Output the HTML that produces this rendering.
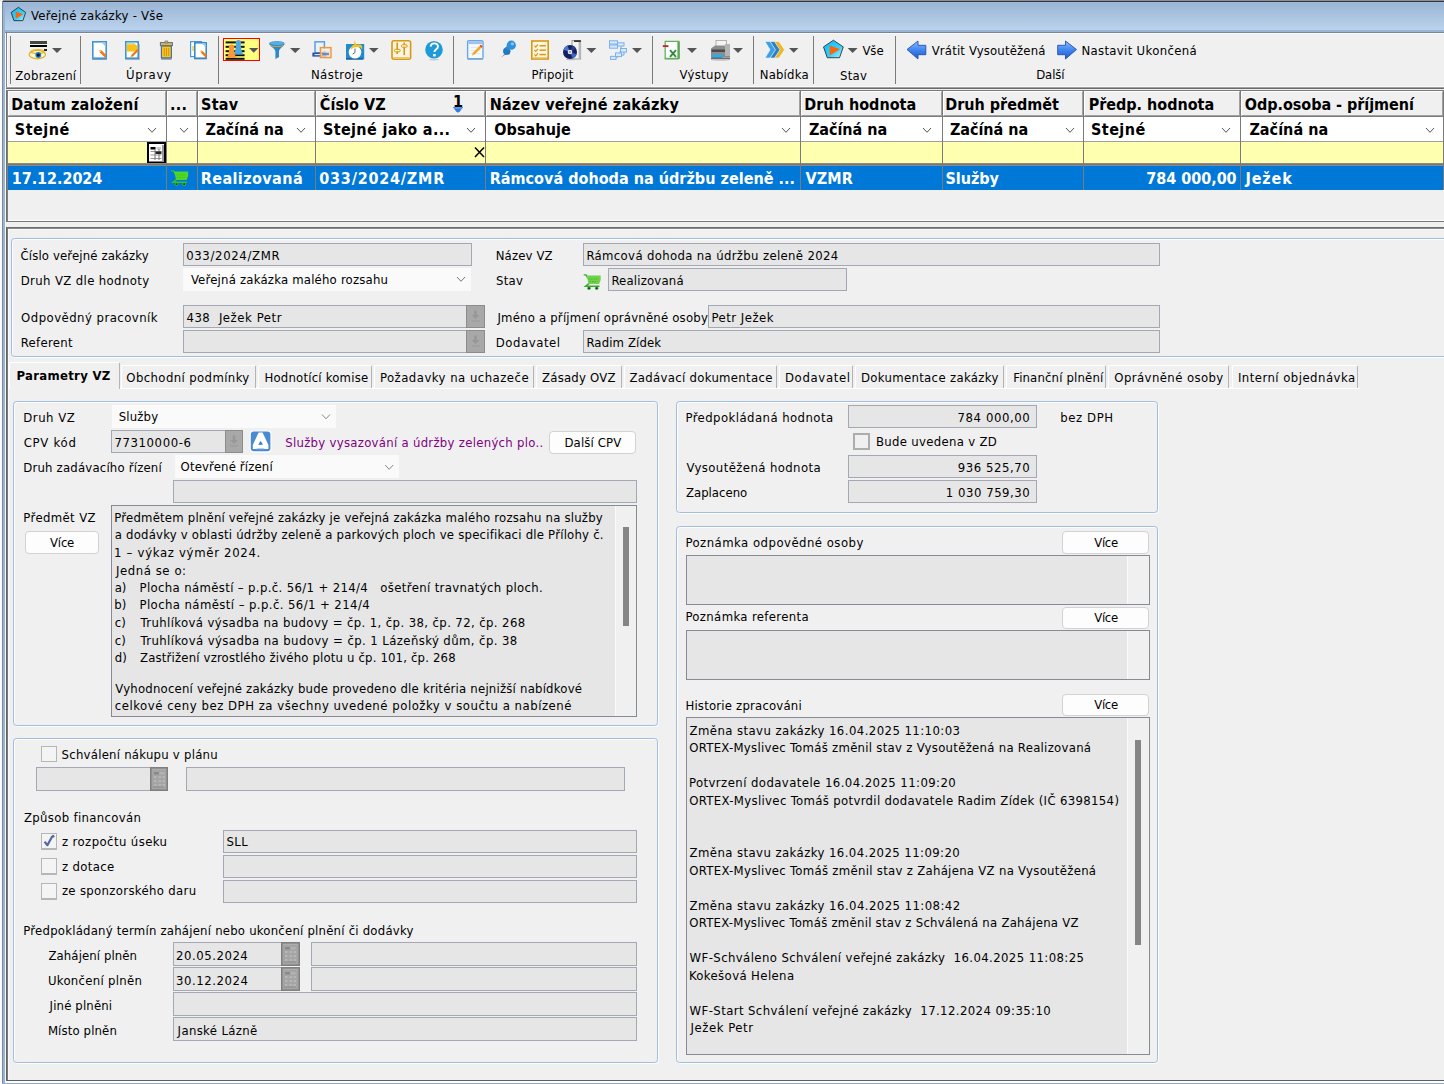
<!DOCTYPE html>
<html lang="cs"><head><meta charset="utf-8"><title>Veřejné zakázky - Vše</title>
<style>
html,body{margin:0;padding:0}
body{width:1444px;height:1084px;overflow:hidden;background:#f0f0f0;position:relative;font-family:"DejaVu Sans Condensed","Liberation Sans",sans-serif;font-size:13px;color:#000}
body div,body span,body svg{position:absolute;box-sizing:border-box}
.t{font-size:13px;line-height:16px;white-space:pre}
.tb{font-size:13px;line-height:16px;white-space:pre;font-weight:bold}
.b{font-size:16px;line-height:20px;white-space:pre;font-weight:bold}
.w{color:#fff}
.p{color:#800080}
.f{background:#e6e6e6;border:1px solid #a4a8b3}
.ta{background:#e6e6e6;border:1px solid #868a93}
.c{background:#fafafa}
.btn{background:#fdfdfd;border:1px solid #d2d2d2;border-radius:4px}
.g{border:1px solid #a5c0e0;border-radius:5px}
.gb{background:#a6a6a6;border:1px solid #8e8e8e}
.cb{background:#f4f4f4;border:1px solid #b6b6b6}
.hc{background:#f0f0f0;border-top:1px solid #fff;border-left:1px solid #fff;border-right:1px solid #a0a0a0;border-bottom:1px solid #a0a0a0}
.fc{background:#fff}
.sep{width:1px;background:#7a7a7a;top:36px;height:48px}
</style></head>
<body>
<div style="left:0px;top:0px;width:1444px;height:1px;background:#8c909c"></div>
<div style="left:0px;top:1px;width:1444px;height:1px;background:#333"></div>
<div style="left:0px;top:2px;width:1444px;height:28px;background:linear-gradient(#99b4d3,#bbd3ed)"></div>
<div style="left:0px;top:2px;width:1444px;height:1px;background:#9cbce0"></div>
<div style="left:0px;top:30px;width:1444px;height:2px;background:#97b4d6"></div>
<div style="left:0px;top:0px;width:2px;height:1084px;background:#fcfcfc"></div>
<div style="left:2px;top:1px;width:1px;height:1084px;background:#7d8797"></div>
<div style="left:3px;top:2px;width:2px;height:1084px;background:#97b5d6"></div>
<div style="left:5px;top:32px;width:1px;height:1084px;background:#fafafa"></div>
<div style="left:0px;top:0px;width:3px;height:1px;background:#e8e8e8"></div>
<svg style="left:8px;top:5px" width="22" height="20" viewBox="0 0 22 20"><defs><linearGradient id="pg2" x1="0" y1="0" x2="1" y2="1"><stop offset="0" stop-color="#00bcff"/><stop offset=".6" stop-color="#38d0f8"/><stop offset="1" stop-color="#c0f4ff"/></linearGradient></defs><polygon points="10.40,2.37 17.63,7.43 14.87,15.63 5.93,15.63 3.17,7.43" fill="url(#pg2)" stroke="#2a3038" stroke-width=".9" stroke-linejoin="round"/><path d="M7.66 6.51l7.60 2.74l-7.60 4.41z" fill="#ff6408"/></svg>
<span class="t" style="left:31.1px;top:8px;letter-spacing:0.250px;">Veřejné zakázky - Vše</span>
<div style="left:5px;top:32px;width:1444px;height:1px;background:#7c8597"></div>
<div style="left:7px;top:33px;width:1444px;height:1px;background:#fafafa"></div>
<div style="left:6px;top:32px;width:1px;height:57px;background:#7d8594"></div>
<div style="left:7px;top:33px;width:1px;height:53px;background:#fafafa"></div>
<div style="left:7px;top:86px;width:1444px;height:1px;background:#fafafa"></div>
<div style="left:6px;top:87px;width:1444px;height:1px;background:#a0a0a0"></div>
<div style="left:6px;top:88px;width:1444px;height:1px;background:#6a6a6a"></div>
<div class="sep" style="left:10px;top:36px;width:1px;height:48px;"></div>
<div class="sep" style="left:80px;top:36px;width:1px;height:48px;"></div>
<div class="sep" style="left:218px;top:36px;width:1px;height:48px;"></div>
<div class="sep" style="left:453px;top:36px;width:1px;height:48px;"></div>
<div class="sep" style="left:652px;top:36px;width:1px;height:48px;"></div>
<div class="sep" style="left:753px;top:36px;width:1px;height:48px;"></div>
<div class="sep" style="left:813px;top:36px;width:1px;height:48px;"></div>
<div class="sep" style="left:895px;top:36px;width:1px;height:48px;"></div>
<svg style="left:0;top:0" width="1444" height="90" viewBox="0 0 1444 90"><defs><linearGradient id="pg" x1="0" y1="0" x2="1" y2="1"><stop offset="0" stop-color="#00bcff"/><stop offset=".6" stop-color="#38d0f8"/><stop offset="1" stop-color="#c0f4ff"/></linearGradient><linearGradient id="ag" x1="0" y1="0" x2="0" y2="1"><stop offset="0" stop-color="#8cbcff"/><stop offset=".5" stop-color="#3f86ee"/><stop offset="1" stop-color="#2458cc"/></linearGradient></defs><rect x="30" y="41" width="17" height="3" fill="#454545"/><rect x="30" y="45" width="17" height="2" fill="#000"/><rect x="44" y="49" width="3" height="2" fill="#222"/><ellipse cx="37.3" cy="54.6" rx="8.2" ry="4.2" fill="#fbf3dc" stroke="#e4b020" stroke-width="1.2"/><ellipse cx="37.5" cy="51.5" rx="6.5" ry="2" fill="none" stroke="#e8b828" stroke-width="1.2"/><circle cx="38.3" cy="55" r="2.9" fill="#1c7cae"/><circle cx="38.3" cy="55" r="1.6" fill="#0a1a2a"/><path d="M52 48h10l-5.0 5z" fill="#555"/><rect x="92.2" y="58" width="14.6" height="2" fill="#7f9fc0"/><rect x="92.8" y="41.8" width="13.4" height="16.4" fill="#fff" stroke="#3f96d2" stroke-width="1.6"/><path d="M101.5 42.5h4v4z" fill="#9ccaf0"/><path d="M99.5 50l2.2 0.6l5.0 5.0l-1.8 1.8l-5.0 -5.0z" fill="#f07818"/><path d="M99.5 50l2.2 0.6l-1.6 1.6z" fill="#f8c860"/><rect x="125.2" y="58" width="14.6" height="2" fill="#9fb0c4"/><rect x="137.5" y="44" width="2.2" height="14.5" fill="#a8a8a8"/><rect x="125.8" y="41.8" width="12.4" height="16.4" fill="#fff" stroke="#3f96d2" stroke-width="1.6"/><rect x="127" y="42.8" width="8" height="1.4" fill="#b8dcc8"/><path d="M127 44.2h8.5l1.8 2v5.2h-10.3z" fill="#f9c116"/><path d="M137.2 49l1.6 1.6l-6 6l-2.2 .6l.6 -2.2z" fill="#f07818"/><path d="M131.2 55l1.6 1.6l-2.2 .6z" fill="#d8b060"/><rect x="161" y="58" width="10.6" height="1.8" fill="#8c9cb0"/><rect x="161.4" y="46" width="10" height="11.8" fill="#fbc41c" stroke="#4c70a4" stroke-width="1.2"/><rect x="160.4" y="42.6" width="12" height="3" fill="#f0b820" stroke="#4c70a4" stroke-width="1"/><rect x="165" y="41" width="2.8" height="2" fill="#f0b820" stroke="#4c70a4" stroke-width=".6"/><path d="M164.3 48v8M166.5 48v8M168.7 48v8" stroke="#cf9a10" stroke-width="1.1"/><rect x="194" y="58" width="12.6" height="1.6" fill="#9fb0c4"/><rect x="190.6" y="41.6" width="11" height="15" fill="#fff" stroke="#4a98d4" stroke-width="1.2"/><rect x="192" y="46" width="2.4" height="5" fill="#f9d870"/><rect x="194.8" y="42.8" width="11.4" height="15.4" fill="#fff" stroke="#2f86c8" stroke-width="1.5"/><path d="M202 43.5h3.6v4z" fill="#9ccaf0"/><path d="M200.5 50.5l2.09 0.57l4.75 4.75l-1.71 1.71l-4.75 -4.75z" fill="#f07818"/><path d="M200.5 50.5l2.09 0.57l-1.52 1.52z" fill="#f8c860"/><rect x="223.5" y="38.5" width="36" height="22" fill="#ffff80" stroke="#ff0000" stroke-width="1"/><rect x="225.600" y="41.4" width="19" height="2" fill="#141400"/><rect x="225.600" y="45.8" width="19" height="2" fill="#141400"/><rect x="225.600" y="50.2" width="19" height="2" fill="#141400"/><rect x="225.600" y="54.2" width="19" height="2" fill="#141400"/><rect x="225.600" y="57.8" width="19" height="2" fill="#141400"/><circle cx="238.400" cy="42.700" r="2.800" fill="#4aa8e2"/><path d="M236 44.500h4.800l.6 5.500l1.800 4.600h-9.600l1.800 -4.600z" fill="#4aa8e2"/><circle cx="231.600" cy="47.400" r="2.800" fill="#f89838"/><path d="M229.200 49.300h4.800l.6 4.500l1.800 4.200h-9.600l1.800 -4.200z" fill="#f89838"/><path d="M249 48h9.4l-4.7 4.8z" fill="#555"/><path d="M269.2 43.6c0 -3 15.4 -3 15.4 0c0 2.6 -5.6 5 -5.6 8v5.4l-3.6 2v-7.4c0 -3 -6.2 -5.4 -6.2 -8z" fill="#2f88cc"/><ellipse cx="276.9" cy="43.3" rx="7.2" ry="1.7" fill="#56aee6"/><path d="M270 45.4c3 1.6 10.8 1.6 13.8 0" stroke="#d8a838" stroke-width="1" fill="none"/><path d="M290 48h10.4l-5.2 5z" fill="#555"/><rect x="315" y="41.8" width="9.4" height="11" fill="#eaf2fc" stroke="#5a9ee8" stroke-width="1.5"/><rect x="312.4" y="52.6" width="14" height="4" fill="#2450a8"/><rect x="314.5" y="54" width="9" height="1.2" fill="#dfe8f8"/><rect x="320.4" y="47.6" width="10.6" height="10" fill="#f4e0c8" fill-opacity=".75" stroke="#f0963a" stroke-width="1.4"/><rect x="322.5" y="49" width="6.5" height="1.6" fill="#f8f0e8"/><rect x="322" y="52.8" width="7" height="2.4" fill="#5578c0" fill-opacity=".8"/><rect x="346" y="44" width="18.2" height="15.4" fill="#1f8bd0"/><rect x="346" y="58.2" width="17" height="1.4" fill="#1a5a90"/><circle cx="355" cy="52.2" r="6.3" fill="#fdfdfd"/><path d="M355 48.5v4l-2.4 1.6" stroke="#667" stroke-width="1" fill="none"/><path d="M354.6 40l1.6 4.6h4.2c2 1 2.4 3.4 1.6 5.2c-.6 -2.4 -2.4 -3 -5 -2.8c-2.6 .2 -5 1 -6.4 3c.2 -3 1.4 -4.600 3.6 -5.400z" fill="#f9c21a"/><path d="M369 48h9.6l-4.8 4.8z" fill="#555"/><rect x="392" y="40.8" width="18.6" height="18.4" rx="2" fill="#fbf4e4" stroke="#d69a0c" stroke-width="1.6"/><rect x="393.4" y="57" width="15.8" height="1.6" fill="#e8c878"/><path d="M397.2 42.5v11.500M404.200 42.500v12.500" stroke="#d69a0c" stroke-width="1.6"/><rect x="394.4" y="49.400" width="5.800" height="2.400" rx="1" fill="#fff4d8" stroke="#d69a0c" stroke-width="1"/><rect x="401.400" y="44.800" width="5.800" height="2.400" rx="1" fill="#fff4d8" stroke="#d69a0c" stroke-width="1"/><ellipse cx="434" cy="59.600" rx="5" ry=".9" fill="#c8ccd0"/><circle cx="434" cy="49.800" r="8.800" fill="#1f9ad8"/><path d="M430.600 46.600c.4 -4.400 7.600 -4.200 7.400 0c-.2 2.600 -3.400 2.800 -3.600 5.400" stroke="#fff" stroke-width="1.900" fill="none"/><rect x="433.100" y="54" width="2.600" height="2.400" fill="#fff"/><rect x="467.400" y="58.200" width="15.600" height="1.600" fill="#7faad8"/><rect x="467.600" y="40.800" width="15.400" height="17.800" rx="1.200" fill="#f4f9ff" stroke="#6aa8e2" stroke-width="1.400"/><rect x="468.400" y="41.500" width="13.800" height="2.600" fill="#9cc4ec"/><path d="M470.500 47.500h10M470.500 50.500h10M470.500 53.500h10" stroke="#d8e6f4" stroke-width=".8"/><path d="M480.800 44.800l1.800 1.800l-8 8l-2.600 .8l.8 -2.600z" fill="#f8a820"/><path d="M479.600 46l1.800 1.800l1.200 -1.200l-1.800 -1.800z" fill="#e84820"/><path d="M500.600 57.800l5.600 -5.400l1 1z" fill="#8a8a8a"/><circle cx="506.800" cy="51.300" r="3.700" fill="#2478c0"/><path d="M505 48l4 -4l3 3l-4 4z" fill="#2a86d0"/><circle cx="511.300" cy="45.200" r="4.600" fill="#2f90dc"/><circle cx="512.400" cy="43.800" r="1.600" fill="#8cc8f4"/><rect x="531.800" y="41" width="16.400" height="18" fill="#fdf6e6" stroke="#d69a0c" stroke-width="1.600"/><rect x="533" y="57" width="14" height="1.400" fill="#ecc878"/><rect x="539.500" y="45" width="6.400" height="1.500" fill="#d69a0c"/><path d="M534.400 45.6l1.400 1.400l2.200 -2.600" stroke="#d69a0c" stroke-width="1.200" fill="none"/><rect x="539.500" y="49.4" width="6.400" height="1.500" fill="#d69a0c"/><path d="M534.400 50.0l1.400 1.400l2.200 -2.600" stroke="#d69a0c" stroke-width="1.200" fill="none"/><rect x="539.500" y="53.8" width="6.400" height="1.500" fill="#d69a0c"/><path d="M534.400 54.4l1.400 1.400l2.200 -2.600" stroke="#d69a0c" stroke-width="1.200" fill="none"/><rect x="572" y="40.600" width="8.600" height="18.400" fill="#f4f4f4" stroke="#9a9a9a" stroke-width="1"/><rect x="574" y="40.200" width="6.800" height="1.800" fill="#333"/><rect x="578.600" y="42" width="2.200" height="16" fill="#b8b8b8"/><ellipse cx="571" cy="59.400" rx="5" ry=".8" fill="#b8bcc4"/><circle cx="570" cy="52" r="7" fill="#14205c"/><path d="M570 52l-6.600 -2.200a7 7 0 0 1 4 -4.400z" fill="#4a78d0"/><path d="M570 52l6.600 2.200a7 7 0 0 1 -4 4.400z" fill="#3a68c8"/><path d="M570 52l2.400 -6.600a7 7 0 0 1 3.600 3.400z" fill="#2a3c90"/><circle cx="570" cy="52" r="2.300" fill="#e8e8f4"/><circle cx="570" cy="52" r="1" fill="#8890b0"/><path d="M586.4 48h10l-5.0 5z" fill="#555"/><path d="M615 44h6v4.500h3v6.500h-4M620 51.500v3.500h-3v3.200" stroke="#6aa6e6" stroke-width="1" fill="none"/><rect x="609.5" y="40.8" width="8" height="3.2" fill="#d8eafc" stroke="#7ab0ec" stroke-width="1"/><rect x="609.5" y="45" width="8" height="3.2" fill="#d8eafc" stroke="#7ab0ec" stroke-width="1"/><rect x="617.5" y="42.8" width="6.5" height="3.2" fill="#d8eafc" stroke="#7ab0ec" stroke-width="1"/><rect x="620.5" y="48.5" width="6" height="3.6" fill="#d8eafc" stroke="#7ab0ec" stroke-width="1"/><rect x="615.5" y="53" width="6" height="3.6" fill="#d8eafc" stroke="#7ab0ec" stroke-width="1"/><rect x="610.5" y="56.4" width="5.5" height="3" fill="#d8eafc" stroke="#7ab0ec" stroke-width="1"/><path d="M632 48h10l-5.0 5z" fill="#555"/><rect x="664.600" y="58.400" width="14" height="1.400" fill="#a8b4a8"/><rect x="665.200" y="41.400" width="13.800" height="17" fill="#fdfdfd" stroke="#62b458" stroke-width="1.300"/><rect x="677.400" y="42" width="2.200" height="16.500" fill="#58a850"/><rect x="662.800" y="45.200" width="5.600" height="1.800" fill="#d81830"/><path d="M670 50.200l6 6.600M676 50.200l-6 6.600" stroke="#2e8a3a" stroke-width="1.900"/><path d="M687 48h10l-5.0 5z" fill="#555"/><rect x="716" y="40.400" width="10.400" height="8" fill="#f4f4f4" stroke="#a0a0a0" stroke-width=".8"/><path d="M711 48.500l4 -3h13l2 3v8.500h-19z" fill="#8c8c8c"/><path d="M711.500 49.500h18v2.500h-18z" fill="#4a4a4a"/><rect x="725" y="44" width="5" height="12" fill="#b4b4b4"/><path d="M713 54h10.500l-1.600 5h-10.800z" fill="#38a8e0"/><rect x="711" y="57.400" width="19" height="2" fill="#6c6c6c"/><ellipse cx="720.500" cy="60" rx="9" ry=".7" fill="#c0c4c8"/><path d="M733 48h10l-5.0 5z" fill="#555"/><path d="M774 41.500h5l5.500 8.300l-5.500 8.300h-5l5 -8.300z" fill="#f2b61c" stroke="#e8f2fc" stroke-width=".7"/><path d="M769.5 41.500h5l5.500 8.300l-5.500 8.300h-5l5 -8.300z" fill="#2f7fc4" stroke="#e8f2fc" stroke-width=".7"/><path d="M765 41.500h5l5.500 8.300l-5.500 8.300h-5l5 -8.300z" fill="#3da0e0" stroke="#e8f2fc" stroke-width=".7"/><path d="M789 48h9.4l-4.7 4.8z" fill="#555"/><polygon points="833.40,40.23 843.29,46.91 839.51,57.72 827.29,57.72 823.51,46.91" fill="url(#pg)" stroke="#2a3038" stroke-width=".9" stroke-linejoin="round"/><path d="M829.66 45.53l10.40 3.74l-10.40 6.03z" fill="#ff6408"/><path d="M847.6 48h10l-5.0 5z" fill="#555"/><path d="M907 49.5l11 -8.500v4.300h7.800v9.400h-7.800v4.300z" fill="url(#ag)" stroke="#2450b4" stroke-width=".9" stroke-linejoin="round"/><path d="M1076.5 49.5l-11 -8.500v4.300h-7.800v9.400h7.800v4.300z" fill="url(#ag)" stroke="#2450b4" stroke-width=".9" stroke-linejoin="round"/></svg>
<span class="t" style="left:15.3px;top:68px;letter-spacing:0.279px;">Zobrazení</span>
<span class="t" style="left:126.0px;top:67px;letter-spacing:0.609px;">Úpravy</span>
<span class="t" style="left:310.9px;top:67px;letter-spacing:0.435px;">Nástroje</span>
<span class="t" style="left:531.6px;top:67px;letter-spacing:0.167px;">Připojit</span>
<span class="t" style="left:679.6px;top:67px;letter-spacing:0.286px;">Výstupy</span>
<span class="t" style="left:759.7px;top:67px;letter-spacing:0.194px;">Nabídka</span>
<span class="t" style="left:840.0px;top:68px;letter-spacing:0.300px;">Stav</span>
<span class="t" style="left:1036.2px;top:67px;letter-spacing:-0.112px;">Další</span>
<span class="t" style="left:862.4px;top:43px;letter-spacing:-0.043px;">Vše</span>
<span class="t" style="left:931.7px;top:43px;letter-spacing:0.159px;">Vrátit Vysoutěžená</span>
<span class="t" style="left:1081.4px;top:43px;letter-spacing:0.333px;">Nastavit Ukončená</span>
<div style="left:6px;top:90px;width:1444px;height:1px;background:#787878"></div>
<div style="left:6px;top:90px;width:1px;height:132px;background:#6d6d6d"></div>
<div style="left:7px;top:91px;width:1px;height:130px;background:#808080"></div>
<div style="left:8px;top:220px;width:1444px;height:1px;background:#fdfdfd"></div>
<div style="left:6px;top:221px;width:1444px;height:1px;background:#787878"></div>
<div class="hc" style="left:8px;top:91px;width:158px;height:25px;"></div>
<div class="fc" style="left:8px;top:117px;width:158px;height:24px;"></div>
<div class="hc" style="left:167px;top:91px;width:30px;height:25px;"></div>
<div class="fc" style="left:167px;top:117px;width:30px;height:24px;"></div>
<div class="hc" style="left:198px;top:91px;width:117px;height:25px;"></div>
<div class="fc" style="left:198px;top:117px;width:117px;height:24px;"></div>
<div class="hc" style="left:316px;top:91px;width:169px;height:25px;"></div>
<div class="fc" style="left:316px;top:117px;width:169px;height:24px;"></div>
<div class="hc" style="left:486px;top:91px;width:314px;height:25px;"></div>
<div class="fc" style="left:486px;top:117px;width:314px;height:24px;"></div>
<div class="hc" style="left:801px;top:91px;width:141px;height:25px;"></div>
<div class="fc" style="left:801px;top:117px;width:141px;height:24px;"></div>
<div class="hc" style="left:943px;top:91px;width:140px;height:25px;"></div>
<div class="fc" style="left:943px;top:117px;width:140px;height:24px;"></div>
<div class="hc" style="left:1084px;top:91px;width:156px;height:25px;"></div>
<div class="fc" style="left:1084px;top:117px;width:156px;height:24px;"></div>
<div class="hc" style="left:1241px;top:91px;width:202px;height:25px;"></div>
<div class="fc" style="left:1241px;top:117px;width:202px;height:24px;"></div>
<div style="left:8px;top:116px;width:1444px;height:1px;background:#7d7d7d"></div>
<div style="left:8px;top:141px;width:1444px;height:1px;background:#a0a0a0"></div>
<div style="left:8px;top:142px;width:1444px;height:21px;background:#ffffb0"></div>
<div style="left:8px;top:163px;width:1444px;height:1px;background:#8a8a8a"></div>
<div style="left:8px;top:164px;width:1444px;height:1px;background:#787878"></div>
<div style="left:8px;top:165px;width:1444px;height:1px;background:#8a8a8a"></div>
<div style="left:8px;top:166px;width:1444px;height:24px;background:#0078d7"></div>
<div style="left:166px;top:91px;width:1px;height:99px;background:#7a7a7a"></div>
<div style="left:197px;top:91px;width:1px;height:99px;background:#7a7a7a"></div>
<div style="left:315px;top:91px;width:1px;height:99px;background:#7a7a7a"></div>
<div style="left:485px;top:91px;width:1px;height:99px;background:#7a7a7a"></div>
<div style="left:800px;top:91px;width:1px;height:99px;background:#7a7a7a"></div>
<div style="left:942px;top:91px;width:1px;height:99px;background:#7a7a7a"></div>
<div style="left:1083px;top:91px;width:1px;height:99px;background:#7a7a7a"></div>
<div style="left:1240px;top:91px;width:1px;height:99px;background:#7a7a7a"></div>
<div style="left:1443px;top:91px;width:1px;height:99px;background:#7a7a7a"></div>
<span class="b" style="left:11.2px;top:95px;letter-spacing:0.165px;">Datum založení</span>
<span class="b" style="left:170.0px;top:95px;letter-spacing:0.262px;">...</span>
<span class="b" style="left:201.0px;top:95px;letter-spacing:0.297px;">Stav</span>
<span class="b" style="left:319.8px;top:95px;letter-spacing:0.055px;">Číslo VZ</span>
<span class="b" style="left:489.7px;top:95px;letter-spacing:0.206px;">Název veřejné zakázky</span>
<span class="b" style="left:804.3px;top:95px;letter-spacing:0.009px;">Druh hodnota</span>
<span class="b" style="left:945.3px;top:95px;letter-spacing:-0.013px;">Druh předmět</span>
<span class="b" style="left:1088.7px;top:95px;letter-spacing:-0.019px;">Předp. hodnota</span>
<span class="b" style="left:1244.8px;top:95px;letter-spacing:-0.044px;">Odp.osoba - příjmení</span>
<span class="b" style="left:14.8px;top:120px;letter-spacing:0.492px;">Stejné</span>
<span class="b" style="left:205.6px;top:120px;letter-spacing:-0.060px;">Začíná na</span>
<span class="b" style="left:323.0px;top:120px;letter-spacing:0.348px;">Stejné jako a...</span>
<span class="b" style="left:494.3px;top:120px;letter-spacing:0.056px;">Obsahuje</span>
<span class="b" style="left:808.9px;top:120px;letter-spacing:-0.035px;">Začíná na</span>
<span class="b" style="left:949.9px;top:120px;letter-spacing:-0.035px;">Začíná na</span>
<span class="b" style="left:1091.0px;top:120px;letter-spacing:0.452px;">Stejné</span>
<span class="b" style="left:1249.4px;top:120px;letter-spacing:0.027px;">Začíná na</span>
<svg style="left:0;top:90px" width="1444" height="110" viewBox="0 90 1444 110"><path d="M148 128l4.0 4.3l4.0 -4.3" stroke="#555" stroke-width="1" fill="none"/><path d="M180 128l4.0 4.3l4.0 -4.3" stroke="#555" stroke-width="1" fill="none"/><path d="M297 128l4.0 4.3l4.0 -4.3" stroke="#555" stroke-width="1" fill="none"/><path d="M467 128l4.0 4.3l4.0 -4.3" stroke="#555" stroke-width="1" fill="none"/><path d="M782 128l4.0 4.3l4.0 -4.3" stroke="#555" stroke-width="1" fill="none"/><path d="M923 128l4.0 4.3l4.0 -4.3" stroke="#555" stroke-width="1" fill="none"/><path d="M1066 128l4.0 4.3l4.0 -4.3" stroke="#555" stroke-width="1" fill="none"/><path d="M1222 128l4.0 4.3l4.0 -4.3" stroke="#555" stroke-width="1" fill="none"/><path d="M1426 128l4.0 4.3l4.0 -4.3" stroke="#555" stroke-width="1" fill="none"/><path d="M452.800 107h10.400l-3.400 4.400l-1.800 1.400l-1.800 -1.400z" fill="#2f7de0"/><path d="M454.500 108h7" stroke="#7ab4f4" stroke-width="1"/><rect x="147" y="142" width="19" height="21" fill="#000"/><rect x="149" y="144" width="15" height="17.5" fill="#fff"/><rect x="162" y="145" width="2" height="16.5" fill="#9a9a9a"/><rect x="150.5" y="147" width="5" height="2.500" fill="#000"/><rect x="156.5" y="147" width="4.500" height="2.500" fill="#ccc"/><rect x="150.5" y="151" width="11" height="1" fill="#999"/><rect x="150.5" y="154.5" width="11" height="1" fill="#999"/><rect x="150.5" y="158" width="11" height="1" fill="#999"/><rect x="154.5" y="149" width="1" height="11" fill="#777"/><rect x="158.5" y="149" width="1" height="11" fill="#777"/><rect x="155.5" y="151.5" width="6" height="2.500" fill="#222"/><path d="M475 147.500l9 9.500M484 147.500l-9 9.500" stroke="#000" stroke-width="1.500"/><g transform="translate(171 170) scale(1.0)"><path d="M.2 .9h2.400l1.100 2.600" stroke="#3cbe1c" stroke-width="1.300" fill="none"/><path d="M3 1.500h14.200v4.500l-1.600 4h-10.400z" fill="#4fd62a"/><path d="M5 5h10M6 7.500h8" stroke="#3cbe1c" stroke-width=".7" stroke-dasharray="1.500 1"/><path d="M5.400 9.600l-3.400 2.600h14" stroke="#3cbe1c" stroke-width="1.400" fill="none"/><circle cx="5.500" cy="14.200" r="1.700" fill="#3cbe1c"/><circle cx="13.200" cy="14.200" r="1.700" fill="#3cbe1c"/><circle cx="5.500" cy="14.200" r=".9" fill="#0a3a4a"/><circle cx="13.200" cy="14.200" r=".9" fill="#0a3a4a"/></g></svg>
<span class="b" style="left:453.0px;top:92px;">1</span>
<span class="b w" style="left:11.7px;top:169px;letter-spacing:-0.043px;">17.12.2024</span>
<span class="b w" style="left:200.7px;top:169px;letter-spacing:0.420px;">Realizovaná</span>
<span class="b w" style="left:319.3px;top:169px;letter-spacing:0.771px;">033/2024/ZMR</span>
<span class="b w" style="left:489.7px;top:169px;letter-spacing:0.023px;">Rámcová dohoda na údržbu zeleně ...</span>
<span class="b w" style="left:805.5px;top:169px;letter-spacing:0.084px;">VZMR</span>
<span class="b w" style="left:945.6px;top:169px;letter-spacing:-0.086px;">Služby</span>
<span class="b w" style="left:1146.3px;top:169px;letter-spacing:-0.030px;">784 000,00</span>
<span class="b w" style="left:1245.6px;top:169px;letter-spacing:0.821px;">Ježek</span>
<div style="left:6px;top:227px;width:1444px;height:1px;background:#6d6d6d"></div>
<div style="left:7px;top:228px;width:1444px;height:1px;background:#8a8a8a"></div>
<div style="left:8px;top:229px;width:1444px;height:1px;background:#fafafa"></div>
<div style="left:6px;top:227px;width:1px;height:854px;background:#5f5f5f"></div>
<div style="left:7px;top:228px;width:1px;height:853px;background:#7a7a7a"></div>
<div style="left:8px;top:229px;width:1px;height:851px;background:#fafafa"></div>
<div style="left:6px;top:1080px;width:1444px;height:1px;background:#5f5f5f"></div>
<div style="left:5px;top:1081px;width:1444px;height:2px;background:#fcfcfc"></div>
<div style="left:2px;top:1083px;width:1444px;height:1px;background:#8faad0"></div>
<div style="left:12px;top:239px;width:1444px;height:119px;border:1px solid #fdfdfd;border-radius:3.5px"></div>
<div style="left:11px;top:238px;width:1444px;height:119px;border:1px solid #a3bde0;border-radius:3.5px"></div>
<span class="t" style="left:20.5px;top:248px;letter-spacing:0.133px;">Číslo veřejné zakázky</span>
<span class="t" style="left:20.7px;top:273px;letter-spacing:0.369px;">Druh VZ dle hodnoty</span>
<span class="t" style="left:21.1px;top:310px;letter-spacing:0.464px;">Odpovědný pracovník</span>
<span class="t" style="left:20.7px;top:335px;letter-spacing:0.307px;">Referent</span>
<div class="f" style="left:183px;top:243px;width:289px;height:23px;"></div>
<span class="t" style="left:186.2px;top:248px;letter-spacing:0.654px;">033/2024/ZMR</span>
<div class="c" style="left:183px;top:268px;width:288px;height:23px;"></div>
<span class="t" style="left:190.9px;top:272px;letter-spacing:0.204px;">Veřejná zakázka malého rozsahu</span>
<div class="f" style="left:183px;top:305px;width:284px;height:23px;"></div>
<span class="t" style="left:186.4px;top:310px;letter-spacing:0.548px;">438  Ježek Petr</span>
<div class="f" style="left:183px;top:330px;width:284px;height:23px;"></div>
<span class="t" style="left:495.7px;top:248px;letter-spacing:0.137px;">Název VZ</span>
<span class="t" style="left:496.0px;top:273px;letter-spacing:0.234px;">Stav</span>
<span class="t" style="left:497.4px;top:310px;letter-spacing:0.206px;">Jméno a příjmení oprávněné osoby</span>
<span class="t" style="left:495.7px;top:335px;letter-spacing:0.570px;">Dodavatel</span>
<div class="f" style="left:583px;top:243px;width:577px;height:23px;"></div>
<span class="t" style="left:586.4px;top:248px;letter-spacing:0.347px;">Rámcová dohoda na údržbu zeleně 2024</span>
<div class="f" style="left:608px;top:268px;width:239px;height:23px;"></div>
<span class="t" style="left:611.4px;top:273px;letter-spacing:0.182px;">Realizovaná</span>
<div class="f" style="left:708px;top:305px;width:452px;height:23px;"></div>
<span class="t" style="left:711.4px;top:310px;letter-spacing:0.502px;">Petr Ježek</span>
<div class="f" style="left:583px;top:330px;width:577px;height:23px;"></div>
<span class="t" style="left:586.4px;top:335px;letter-spacing:0.122px;">Radim Zídek</span>
<svg style="left:0;top:230px" width="1444" height="130" viewBox="0 230 1444 130"><rect x="466.5" y="305.5" width="18" height="22" fill="#a8a8a8" stroke="#8c8c8c"/><path d="M474.3 310.5h2.400v4.500h2.600l-3.800 4l-3.800 -4h2.600z" fill="#979797"/><rect x="471.5" y="320.5" width="8" height="1" fill="#979797"/><rect x="466.5" y="330.5" width="18" height="22" fill="#a8a8a8" stroke="#8c8c8c"/><path d="M474.3 335.5h2.400v4.500h2.600l-3.800 4l-3.800 -4h2.600z" fill="#979797"/><rect x="471.5" y="345.5" width="8" height="1" fill="#979797"/><path d="M457 277l4.0 4.3l4.0 -4.3" stroke="#777" stroke-width="1" fill="none"/><g transform="translate(583.5 274) scale(1.0)"><path d="M.2 .9h2.400l1.100 2.600" stroke="#3aa82a" stroke-width="1.300" fill="none"/><path d="M3 1.500h14.200v4.500l-1.600 4h-10.400z" fill="#6fd24a"/><path d="M5 5h10M6 7.500h8" stroke="#3aa82a" stroke-width=".7" stroke-dasharray="1.500 1"/><path d="M5.400 9.600l-3.400 2.600h14" stroke="#3aa82a" stroke-width="1.400" fill="none"/><circle cx="5.500" cy="14.200" r="1.700" fill="#3aa82a"/><circle cx="13.200" cy="14.200" r="1.700" fill="#3aa82a"/><circle cx="5.500" cy="14.200" r=".9" fill="#0a3a4a"/><circle cx="13.200" cy="14.200" r=".9" fill="#0a3a4a"/></g></svg>
<div style="left:120px;top:387px;width:1239px;height:2px;background:#fff"></div>
<div style="left:121px;top:365px;width:135px;height:23px;border-left:1.500px solid #fff;border-top:1px solid #fff;border-right:1px solid #b4b4b4;border-radius:2px 2px 0 0;background:#f0f0f0"></div>
<span class="t" style="left:126.3px;top:370px;letter-spacing:0.391px;">Obchodní podmínky</span>
<div style="left:258px;top:365px;width:114px;height:23px;border-left:1.500px solid #fff;border-top:1px solid #fff;border-right:1px solid #b4b4b4;border-radius:2px 2px 0 0;background:#f0f0f0"></div>
<span class="t" style="left:264.4px;top:370px;letter-spacing:0.212px;">Hodnotící komise</span>
<div style="left:374px;top:365px;width:160px;height:23px;border-left:1.500px solid #fff;border-top:1px solid #fff;border-right:1px solid #b4b4b4;border-radius:2px 2px 0 0;background:#f0f0f0"></div>
<span class="t" style="left:379.9px;top:370px;letter-spacing:0.479px;">Požadavky na uchazeče</span>
<div style="left:536px;top:365px;width:86px;height:23px;border-left:1.500px solid #fff;border-top:1px solid #fff;border-right:1px solid #b4b4b4;border-radius:2px 2px 0 0;background:#f0f0f0"></div>
<span class="t" style="left:542.0px;top:370px;letter-spacing:0.229px;">Zásady OVZ</span>
<div style="left:624px;top:365px;width:153px;height:23px;border-left:1.500px solid #fff;border-top:1px solid #fff;border-right:1px solid #b4b4b4;border-radius:2px 2px 0 0;background:#f0f0f0"></div>
<span class="t" style="left:629.5px;top:370px;letter-spacing:0.307px;">Zadávací dokumentace</span>
<div style="left:779px;top:365px;width:74px;height:23px;border-left:1.500px solid #fff;border-top:1px solid #fff;border-right:1px solid #b4b4b4;border-radius:2px 2px 0 0;background:#f0f0f0"></div>
<span class="t" style="left:784.9px;top:370px;letter-spacing:0.670px;">Dodavatel</span>
<div style="left:855px;top:365px;width:149px;height:23px;border-left:1.500px solid #fff;border-top:1px solid #fff;border-right:1px solid #b4b4b4;border-radius:2px 2px 0 0;background:#f0f0f0"></div>
<span class="t" style="left:860.9px;top:370px;letter-spacing:0.336px;">Dokumentace zakázky</span>
<div style="left:1006px;top:365px;width:100px;height:23px;border-left:1.500px solid #fff;border-top:1px solid #fff;border-right:1px solid #b4b4b4;border-radius:2px 2px 0 0;background:#f0f0f0"></div>
<span class="t" style="left:1013.2px;top:370px;letter-spacing:0.160px;">Finanční plnění</span>
<div style="left:1108px;top:365px;width:121px;height:23px;border-left:1.500px solid #fff;border-top:1px solid #fff;border-right:1px solid #b4b4b4;border-radius:2px 2px 0 0;background:#f0f0f0"></div>
<span class="t" style="left:1114.3px;top:370px;letter-spacing:0.413px;">Oprávněné osoby</span>
<div style="left:1232px;top:365px;width:126px;height:23px;border-left:1.500px solid #fff;border-top:1px solid #fff;border-right:1px solid #b4b4b4;border-radius:2px 2px 0 0;background:#f0f0f0"></div>
<span class="t" style="left:1237.9px;top:370px;letter-spacing:0.467px;">Interní objednávka</span>
<div style="left:9px;top:362px;width:111px;height:27px;border-left:1.500px solid #fff;border-top:1px solid #fff;border-right:1.500px solid #b4b4b4;border-radius:2px 2px 0 0;background:#f0f0f0"></div>
<span class="tb" style="left:16.5px;top:368px;letter-spacing:0.301px;">Parametry VZ</span>
<div style="left:14px;top:402px;width:645px;height:325px;border:1px solid #fdfdfd;border-radius:3.5px"></div>
<div style="left:13px;top:401px;width:645px;height:325px;border:1px solid #a3bde0;border-radius:3.5px"></div>
<span class="t" style="left:23.3px;top:410px;letter-spacing:0.515px;">Druh VZ</span>
<div class="c" style="left:112px;top:405px;width:224px;height:23px;"></div>
<span class="t" style="left:118.8px;top:409px;letter-spacing:0.147px;">Služby</span>
<span class="t" style="left:23.7px;top:435px;letter-spacing:0.731px;">CPV kód</span>
<div class="f" style="left:111px;top:430px;width:115px;height:23px;"></div>
<span class="t" style="left:114.4px;top:435px;letter-spacing:0.600px;">77310000-6</span>
<span class="t p" style="left:285.2px;top:435px;letter-spacing:0.286px;">Služby vysazování a údržby zelených plo..</span>
<div class="btn" style="left:549px;top:431px;width:87px;height:23px;"></div>
<span class="t" style="left:564.5px;top:435px;letter-spacing:0.116px;">Další CPV</span>
<span class="t" style="left:23.3px;top:460px;letter-spacing:0.194px;">Druh zadávacího řízení</span>
<div class="c" style="left:175px;top:455px;width:224px;height:23px;"></div>
<span class="t" style="left:180.6px;top:459px;letter-spacing:0.145px;">Otevřené řízení</span>
<div class="f" style="left:173px;top:480px;width:464px;height:23px;"></div>
<span class="t" style="left:23.3px;top:510px;letter-spacing:0.376px;">Předmět VZ</span>
<div class="btn" style="left:25px;top:531px;width:74px;height:23px;"></div>
<span class="t" style="left:50.1px;top:535px;letter-spacing:-0.227px;">Více</span>
<div class="ta" style="left:111px;top:505px;width:526px;height:212px;"></div>
<div style="left:615px;top:506px;width:21px;height:210px;background:#f0f0f0;border-left:1px solid #fafafa"></div>
<div style="left:623px;top:527px;width:6px;height:99px;background:#858585"></div>
<span class="t" style="left:114.3px;top:510px;letter-spacing:0.203px;">Předmětem plnění veřejné zakázky je veřejná zakázka malého rozsahu na služby</span>
<span class="t" style="left:114.7px;top:527px;letter-spacing:0.218px;">a dodávky v oblasti údržby zeleně a parkových ploch ve specifikaci dle Přílohy č.</span>
<span class="t" style="left:114.1px;top:545px;letter-spacing:0.680px;">1 – výkaz výměr 2024.</span>
<span class="t" style="left:116.0px;top:563px;letter-spacing:0.559px;">Jedná se o:</span>
<span class="t" style="left:114.7px;top:580px;">a)</span>
<span class="t" style="left:139.5px;top:580px;letter-spacing:0.354px;">Plocha náměstí – p.p.č. 56/1 + 214/4   ošetření travnatých ploch.</span>
<span class="t" style="left:114.3px;top:597px;">b)</span>
<span class="t" style="left:139.5px;top:597px;letter-spacing:0.409px;">Plocha náměstí – p.p.č. 56/1 + 214/4</span>
<span class="t" style="left:114.8px;top:615px;">c)</span>
<span class="t" style="left:140.6px;top:615px;letter-spacing:0.390px;">Truhlíková výsadba na budovy = čp. 1, čp. 38, čp. 72, čp. 268</span>
<span class="t" style="left:114.8px;top:633px;">c)</span>
<span class="t" style="left:140.6px;top:633px;letter-spacing:0.405px;">Truhlíková výsadba na budovy = čp. 1 Lázeňský dům, čp. 38</span>
<span class="t" style="left:114.8px;top:650px;">d)</span>
<span class="t" style="left:140.1px;top:650px;letter-spacing:0.166px;">Zastřižení vzrostlého živého plotu u čp. 101, čp. 268</span>
<span class="t" style="left:115.3px;top:681px;letter-spacing:0.214px;">Vyhodnocení veřejné zakázky bude provedeno dle kritéria nejnižší nabídkové</span>
<span class="t" style="left:114.8px;top:698px;letter-spacing:0.524px;">celkové ceny bez DPH za všechny uvedené položky v součtu a nabízené</span>
<svg style="left:0;top:400px" width="700" height="80" viewBox="0 400 700 80"><path d="M322 414.5l4.0 4.3l4.0 -4.3" stroke="#888" stroke-width="1" fill="none"/><path d="M385.2 465l4.0 4.3l4.0 -4.3" stroke="#888" stroke-width="1" fill="none"/><rect x="225.5" y="430.5" width="17" height="22" fill="#a8a8a8" stroke="#8c8c8c"/><path d="M232.8 435.5h2.400v4.500h2.600l-3.800 4l-3.800 -4h2.600z" fill="#979797"/><rect x="230.0" y="445.5" width="8" height="1" fill="#979797"/><rect x="249.800" y="430.800" width="21.600" height="21.600" rx="3.500" fill="#fff"/><rect x="250.800" y="431.600" width="19.600" height="19.600" rx="3" fill="#4a8ad2"/><path d="M258.600 432.400h4l5.800 12.600v4h-15.600v-4z" fill="#fff"/><path d="M260.600 441l2.400 3.800h-4.800z" fill="#2f78cc"/><rect x="256.800" y="448" width="7.600" height="1.200" fill="#b8d0ee"/></svg>
<div style="left:14px;top:739px;width:645px;height:325px;border:1px solid #fdfdfd;border-radius:3.5px"></div>
<div style="left:13px;top:738px;width:645px;height:325px;border:1px solid #a3bde0;border-radius:3.5px"></div>
<div class="cb" style="left:41px;top:746px;width:16px;height:16px;"></div>
<span class="t" style="left:61.6px;top:747px;letter-spacing:0.244px;">Schválení nákupu v plánu</span>
<div class="f" style="left:36px;top:767px;width:115px;height:24px;"></div>
<div class="f" style="left:186px;top:767px;width:439px;height:24px;"></div>
<span class="t" style="left:23.9px;top:810px;letter-spacing:0.339px;">Způsob financován</span>
<div class="cb" style="left:41px;top:833px;width:16px;height:17px;border-bottom-width:2px;"></div>
<span class="t" style="left:61.9px;top:834px;letter-spacing:0.418px;">z rozpočtu úseku</span>
<div class="f" style="left:223px;top:830px;width:414px;height:23px;"></div>
<span class="t" style="left:226.4px;top:834px;letter-spacing:0.436px;">SLL</span>
<div class="cb" style="left:41px;top:858px;width:16px;height:17px;border-bottom-width:2px;"></div>
<span class="t" style="left:61.9px;top:859px;letter-spacing:0.373px;">z dotace</span>
<div class="f" style="left:223px;top:855px;width:414px;height:23px;"></div>
<div class="cb" style="left:41px;top:883px;width:16px;height:17px;border-bottom-width:2px;"></div>
<span class="t" style="left:61.9px;top:883px;letter-spacing:0.328px;">ze sponzorského daru</span>
<div class="f" style="left:223px;top:880px;width:414px;height:23px;"></div>
<span class="t" style="left:23.3px;top:923px;letter-spacing:0.221px;">Předpokládaný termín zahájení nebo ukončení plnění či dodávky</span>
<span class="t" style="left:48.5px;top:948px;letter-spacing:0.093px;">Zahájení plněn</span>
<div class="f" style="left:173px;top:942px;width:109px;height:24px;"></div>
<span class="t" style="left:176.1px;top:948px;letter-spacing:0.528px;">20.05.2024</span>
<div class="f" style="left:311px;top:942px;width:326px;height:24px;"></div>
<span class="t" style="left:48.0px;top:973px;letter-spacing:0.281px;">Ukončení plněn</span>
<div class="f" style="left:173px;top:967px;width:109px;height:24px;"></div>
<span class="t" style="left:176.1px;top:973px;letter-spacing:0.531px;">30.12.2024</span>
<div class="f" style="left:311px;top:967px;width:326px;height:24px;"></div>
<span class="t" style="left:49.6px;top:998px;letter-spacing:0.150px;">Jiné plněni</span>
<div class="f" style="left:173px;top:992px;width:464px;height:24px;"></div>
<span class="t" style="left:47.9px;top:1023px;letter-spacing:0.134px;">Místo plněn</span>
<div class="f" style="left:173px;top:1017px;width:464px;height:24px;"></div>
<span class="t" style="left:177.6px;top:1023px;letter-spacing:0.349px;">Janské Lázně</span>
<svg style="left:0;top:740px" width="700" height="260" viewBox="0 740 700 260"><rect x="150.75" y="767.75" width="16.5" height="22.5" fill="#a4a4a4" stroke="#7f7f7f" stroke-width="1.500"/><rect x="152" y="769" width="14" height="1" fill="#aeaeae"/><rect x="154" y="772" width="5" height="2.500" fill="#8a8a8a"/><rect x="159.5" y="772" width="5" height="2.500" fill="#b2b2b2"/><rect x="154" y="776" width="2.500" height="2.200" fill="#b6b6b6"/><rect x="158.5" y="776" width="2.500" height="2.200" fill="#b6b6b6"/><rect x="162.5" y="776" width="2.500" height="2.200" fill="#b6b6b6"/><rect x="154" y="780" width="2.500" height="2.200" fill="#b6b6b6"/><rect x="158.5" y="780" width="2.500" height="2.200" fill="#b6b6b6"/><rect x="162.5" y="780" width="2.500" height="2.200" fill="#b6b6b6"/><rect x="154" y="784" width="2.500" height="2.200" fill="#b6b6b6"/><rect x="158.5" y="784" width="2.500" height="2.200" fill="#b6b6b6"/><rect x="162.5" y="784" width="2.500" height="2.200" fill="#b6b6b6"/><rect x="153" y="786.5" width="11" height="1" fill="#8e8e8e"/><rect x="281.75" y="942.75" width="17.5" height="22.5" fill="#a4a4a4" stroke="#7f7f7f" stroke-width="1.500"/><rect x="283" y="944" width="15" height="1" fill="#aeaeae"/><rect x="285" y="947" width="5" height="2.500" fill="#8a8a8a"/><rect x="290.5" y="947" width="5" height="2.500" fill="#b2b2b2"/><rect x="285" y="951" width="2.500" height="2.200" fill="#b6b6b6"/><rect x="289.5" y="951" width="2.500" height="2.200" fill="#b6b6b6"/><rect x="293.5" y="951" width="2.500" height="2.200" fill="#b6b6b6"/><rect x="285" y="955" width="2.500" height="2.200" fill="#b6b6b6"/><rect x="289.5" y="955" width="2.500" height="2.200" fill="#b6b6b6"/><rect x="293.5" y="955" width="2.500" height="2.200" fill="#b6b6b6"/><rect x="285" y="959" width="2.500" height="2.200" fill="#b6b6b6"/><rect x="289.5" y="959" width="2.500" height="2.200" fill="#b6b6b6"/><rect x="293.5" y="959" width="2.500" height="2.200" fill="#b6b6b6"/><rect x="284" y="961.5" width="12" height="1" fill="#8e8e8e"/><rect x="281.75" y="967.75" width="17.5" height="22.5" fill="#a4a4a4" stroke="#7f7f7f" stroke-width="1.500"/><rect x="283" y="969" width="15" height="1" fill="#aeaeae"/><rect x="285" y="972" width="5" height="2.500" fill="#8a8a8a"/><rect x="290.5" y="972" width="5" height="2.500" fill="#b2b2b2"/><rect x="285" y="976" width="2.500" height="2.200" fill="#b6b6b6"/><rect x="289.5" y="976" width="2.500" height="2.200" fill="#b6b6b6"/><rect x="293.5" y="976" width="2.500" height="2.200" fill="#b6b6b6"/><rect x="285" y="980" width="2.500" height="2.200" fill="#b6b6b6"/><rect x="289.5" y="980" width="2.500" height="2.200" fill="#b6b6b6"/><rect x="293.5" y="980" width="2.500" height="2.200" fill="#b6b6b6"/><rect x="285" y="984" width="2.500" height="2.200" fill="#b6b6b6"/><rect x="289.5" y="984" width="2.500" height="2.200" fill="#b6b6b6"/><rect x="293.5" y="984" width="2.500" height="2.200" fill="#b6b6b6"/><rect x="284" y="986.5" width="12" height="1" fill="#8e8e8e"/><path d="M44.600 841.600l2.800 3.600l4.600 -8.400l1.200 -.8l.6 1.400" stroke="#5666a0" stroke-width="2.200" fill="none" stroke-linejoin="round"/></svg>
<div style="left:677px;top:402px;width:482px;height:112px;border:1px solid #fdfdfd;border-radius:3.5px"></div>
<div style="left:676px;top:401px;width:482px;height:112px;border:1px solid #a3bde0;border-radius:3.5px"></div>
<span class="t" style="left:685.4px;top:410px;letter-spacing:0.438px;">Předpokládaná hodnota</span>
<div class="f" style="left:848px;top:405px;width:189px;height:23px;"></div>
<span class="t" style="right:413.7px;top:410px;letter-spacing:0.586px;">784 000,00</span>
<span class="t" style="left:1060.3px;top:410px;letter-spacing:0.576px;">bez DPH</span>
<div style="left:853px;top:433px;width:17px;height:17px;border:2px solid #adadad;background:#f0f0f0"></div>
<span class="t" style="left:875.9px;top:434px;letter-spacing:0.309px;">Bude uvedena v ZD</span>
<span class="t" style="left:686.4px;top:460px;letter-spacing:0.405px;">Vysoutěžená hodnota</span>
<div class="f" style="left:848px;top:455px;width:189px;height:23px;"></div>
<span class="t" style="right:413.7px;top:460px;letter-spacing:0.561px;">936 525,70</span>
<span class="t" style="left:686.0px;top:485px;">Zaplaceno</span>
<div class="f" style="left:848px;top:480px;width:189px;height:23px;"></div>
<span class="t" style="right:413.7px;top:485px;letter-spacing:0.540px;">1 030 759,30</span>
<div style="left:677px;top:527px;width:482px;height:537px;border:1px solid #fdfdfd;border-radius:3.5px"></div>
<div style="left:676px;top:526px;width:482px;height:537px;border:1px solid #a3bde0;border-radius:3.5px"></div>
<span class="t" style="left:685.4px;top:535px;letter-spacing:0.475px;">Poznámka odpovědné osoby</span>
<div class="btn" style="left:1062px;top:531px;width:87px;height:23px;"></div>
<span class="t" style="left:1094.2px;top:535px;letter-spacing:-0.293px;">Více</span>
<div class="ta" style="left:686px;top:555px;width:464px;height:50px;"></div>
<div style="left:1127px;top:556px;width:22px;height:48px;background:#f0f0f0;border-left:1px solid #fafafa"></div>
<span class="t" style="left:685.4px;top:609px;letter-spacing:0.358px;">Poznámka referenta</span>
<div class="btn" style="left:1062px;top:607px;width:87px;height:22px;"></div>
<span class="t" style="left:1094.2px;top:610px;letter-spacing:-0.293px;">Více</span>
<div class="ta" style="left:686px;top:630px;width:464px;height:50px;"></div>
<div style="left:1127px;top:631px;width:22px;height:48px;background:#f0f0f0;border-left:1px solid #fafafa"></div>
<span class="t" style="left:685.4px;top:698px;letter-spacing:0.201px;">Historie zpracováni</span>
<div class="btn" style="left:1062px;top:694px;width:87px;height:22px;"></div>
<span class="t" style="left:1094.2px;top:697px;letter-spacing:-0.293px;">Více</span>
<div class="ta" style="left:686px;top:717px;width:464px;height:338px;"></div>
<div style="left:1127px;top:718px;width:22px;height:336px;background:#f0f0f0;border-left:1px solid #fafafa"></div>
<div style="left:1135px;top:740px;width:6px;height:205px;background:#858585"></div>
<span class="t" style="left:689.5px;top:723px;letter-spacing:0.431px;">Změna stavu zakázky 16.04.2025 11:10:03</span>
<span class="t" style="left:689.3px;top:740px;letter-spacing:0.282px;">ORTEX-Myslivec Tomáš změnil stav z Vysoutěžená na Realizovaná</span>
<span class="t" style="left:688.9px;top:775px;letter-spacing:0.430px;">Potvrzení dodavatele 16.04.2025 11:09:20</span>
<span class="t" style="left:689.3px;top:793px;letter-spacing:0.338px;">ORTEX-Myslivec Tomáš potvrdil dodavatele Radim Zídek (IČ 6398154)</span>
<span class="t" style="left:689.5px;top:845px;letter-spacing:0.427px;">Změna stavu zakázky 16.04.2025 11:09:20</span>
<span class="t" style="left:689.3px;top:863px;letter-spacing:0.296px;">ORTEX-Myslivec Tomáš změnil stav z Zahájena VZ na Vysoutěžená</span>
<span class="t" style="left:689.5px;top:898px;letter-spacing:0.437px;">Změna stavu zakázky 16.04.2025 11:08:42</span>
<span class="t" style="left:689.3px;top:915px;letter-spacing:0.255px;">ORTEX-Myslivec Tomáš změnil stav z Schválená na Zahájena VZ</span>
<span class="t" style="left:689.6px;top:950px;letter-spacing:0.400px;">WF-Schváleno Schválení veřejné zakázky  16.04.2025 11:08:25</span>
<span class="t" style="left:688.9px;top:968px;letter-spacing:0.388px;">Kokešová Helena</span>
<span class="t" style="left:689.6px;top:1003px;letter-spacing:0.403px;">WF-Start Schválení veřejné zakázky  17.12.2024 09:35:10</span>
<span class="t" style="left:690.6px;top:1020px;letter-spacing:0.526px;">Ježek Petr</span>
</body></html>
